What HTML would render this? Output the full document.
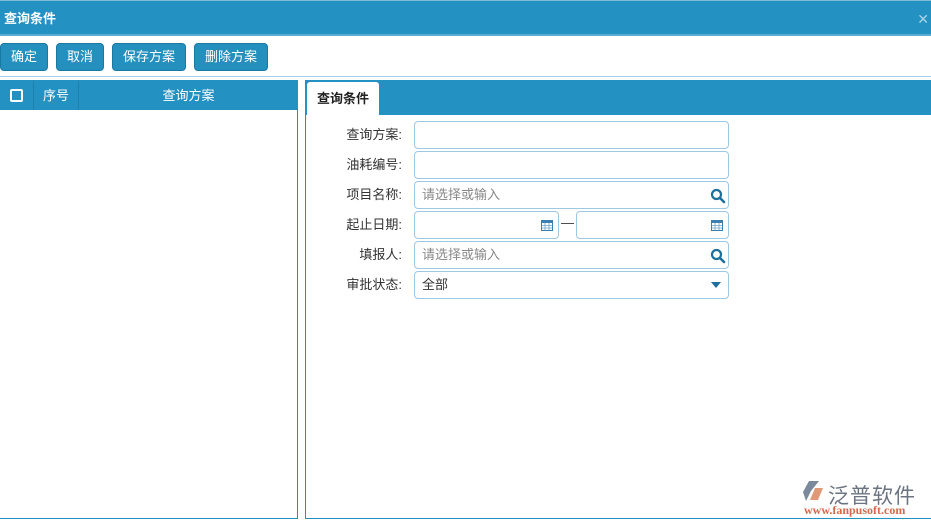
<!DOCTYPE html>
<html><head><meta charset="utf-8"><style>
*{margin:0;padding:0;box-sizing:border-box}
body{width:931px;height:527px;background:#fff;font-family:"Liberation Sans","Noto Sans CJK SC",sans-serif;font-size:13px;position:relative;overflow:hidden;color:#333}
.title{position:absolute;left:0;top:0;width:931px;height:36px;background:#2391c1;color:#fff;font-weight:bold;font-size:13px;line-height:36px;padding-left:4px;border-top:1px solid #7fbcd9;border-bottom:2px solid #5aaed4}
.close{position:absolute;right:2px;top:0;color:#a9d3e8;font-size:14px;font-weight:normal}
.btn{position:absolute;top:43px;height:28px;background:#2590bd;border:1px solid #1a79a3;border-radius:4px;color:#fff;line-height:26px;text-align:center;font-size:13px}
.sep{position:absolute;left:0;top:76px;width:931px;height:1px;background:#a8d0e6}
.lp{position:absolute;left:0;top:80px;width:298px;height:439px;border:1px solid #2391c1;border-left:none}
.lh{height:29px;background:#2391c1;color:#fff;position:relative}
.lh div{position:absolute;top:0;height:29px;line-height:29px}
.rp{position:absolute;left:305px;top:80px;width:626px;height:439px;border:1px solid #2391c1;border-right:none}
.rh{height:34px;background:#2391c1;position:relative}
.tab{position:absolute;left:1px;top:1px;width:72px;height:33px;background:#fff;border-radius:3px 3px 0 0;font-weight:bold;color:#222;line-height:33px;text-align:center}
.lab{position:absolute;left:0;width:402px;text-align:right;color:#333}
.inp{position:absolute;height:28px;border:1px solid #9ec7e3;border-radius:4px;background:#fff;padding-left:7px;line-height:26px;color:#333}
.ph{color:#888}
.ic{position:absolute;right:2px;top:6px}
</style></head><body>
<div class="title">查询条件<span class="close">✕</span></div>
<div class="btn" style="left:0;width:48px">确定</div>
<div class="btn" style="left:56px;width:48px">取消</div>
<div class="btn" style="left:112px;width:74px">保存方案</div>
<div class="btn" style="left:194px;width:74px">删除方案</div>
<div class="sep"></div>
<div class="lp"><div class="lh">
<div style="left:0;width:34px;border-right:1px solid #1d7fab"><span style="position:absolute;left:10px;top:8px;width:13px;height:13px;border:2px solid #fff;border-radius:2px"></span></div>
<div style="left:34px;width:45px;border-right:1px solid #1d7fab;text-align:center">序号</div>
<div style="left:79px;width:219px;text-align:center">查询方案</div>
</div></div>
<div class="rp"><div class="rh"><div class="tab">查询条件</div></div></div>
<div class="lab" style="top:124px">查询方案:</div>
<div class="inp" style="left:414px;top:121px;width:315px"></div>
<div class="lab" style="top:154px">油耗编号:</div>
<div class="inp" style="left:414px;top:151px;width:315px"></div>
<div class="lab" style="top:184px">项目名称:</div>
<div class="inp" style="left:414px;top:181px;width:315px"><span class="ph">请选择或输入</span><svg class="ic" width="16" height="16" viewBox="0 0 16 16"><circle cx="6.5" cy="6.5" r="4.5" fill="none" stroke="#1e6f9c" stroke-width="2.2"/><path d="M10 10l4 4" stroke="#1e6f9c" stroke-width="2.6" stroke-linecap="round"/></svg></div>
<div class="lab" style="top:214px">起止日期:</div>
<div class="inp" style="left:414px;top:211px;width:145px"><svg class="ic" style="right:5px;top:7px" width="12" height="12" viewBox="0 0 12 12"><rect x="0.5" y="1.5" width="11" height="10" fill="#fff" stroke="#3a7fb0"/><rect x="0.5" y="1.5" width="11" height="2.5" fill="#3a7fb0"/><path d="M4 4v7M8 4v7M1 6.5h10M1 9h10" stroke="#6aa0c8" stroke-width=".8"/></svg></div>
<div style="position:absolute;left:561px;top:215px">—</div>
<div class="inp" style="left:576px;top:211px;width:153px"><svg class="ic" style="right:5px;top:7px" width="12" height="12" viewBox="0 0 12 12"><rect x="0.5" y="1.5" width="11" height="10" fill="#fff" stroke="#3a7fb0"/><rect x="0.5" y="1.5" width="11" height="2.5" fill="#3a7fb0"/><path d="M4 4v7M8 4v7M1 6.5h10M1 9h10" stroke="#6aa0c8" stroke-width=".8"/></svg></div>
<div class="lab" style="top:244px">填报人:</div>
<div class="inp" style="left:414px;top:241px;width:315px"><span class="ph">请选择或输入</span><svg class="ic" width="16" height="16" viewBox="0 0 16 16"><circle cx="6.5" cy="6.5" r="4.5" fill="none" stroke="#1e6f9c" stroke-width="2.2"/><path d="M10 10l4 4" stroke="#1e6f9c" stroke-width="2.6" stroke-linecap="round"/></svg></div>
<div class="lab" style="top:274px">审批状态:</div>
<div class="inp" style="left:414px;top:271px;width:315px">全部<svg class="ic" style="right:7px;top:10px" width="10" height="6" viewBox="0 0 10 6"><path d="M0 0h10L5 6z" fill="#1e6f9c"/></svg></div>
<div style="position:absolute;left:803px;top:480px;width:20px;height:22px"><svg width="22" height="22" viewBox="0 0 22 22"><path d="M6 1h10L8 11 3 21 0 12z" fill="#7a8a9a"/><path d="M12 8h8l-5 12H7z" fill="#e09a78"/></svg></div>
<div style="position:absolute;left:828px;top:480px;font-size:21px;color:#6b7480;letter-spacing:1px">泛普软件</div>
<div style="position:absolute;left:804px;top:503px;font-family:'Liberation Serif',serif;font-size:12px;color:#d26a4a;font-weight:bold">www.fanpusoft.com</div>
</body></html>
